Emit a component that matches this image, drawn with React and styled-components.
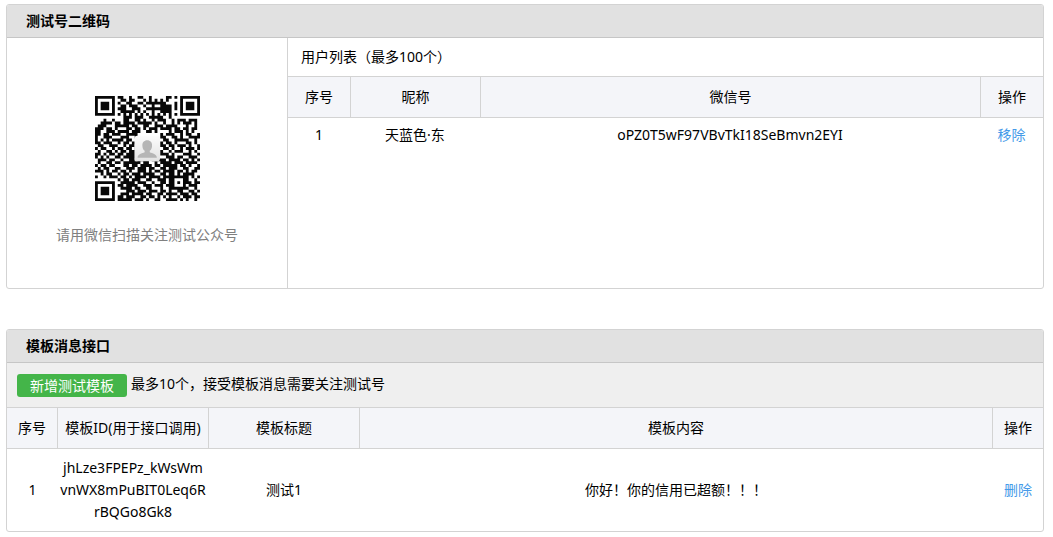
import React from "react";
import styled, { createGlobalStyle } from "styled-components";

const GlobalStyle = createGlobalStyle`
body {
margin: 0;
background-color: #ffffff;
color: #000000;
font-family: "Noto Sans", "Noto Sans CJK SC", sans-serif;
font-size: 14px;
line-height: 22px;
}
`;

const Page = styled.main`
display: flex;
flex-direction: column;
gap: 40px;
padding: 4px 9px 4px 6px;
`;

const Panel = styled.section`
border: 1px solid #d3d3d3;
border-radius: 3px;
overflow: hidden;
`;

const PanelTitle = styled.h2`
margin: 0;
padding: 5px 19px;
font-size: 14px;
font-weight: 700;
background-color: #e1e1e1;
border-bottom: 1px solid #c6c6c6;
`;

const PanelBody = styled.div`
display: flex;
`;

const QrSide = styled.div`
display: flex;
flex-direction: column;
align-items: center;
gap: 23px;
box-sizing: border-box;
width: 281px;
flex-shrink: 0;
padding: 58px 20px 42px;
border-right: 1px solid #d3d3d3;
`;

const QrTip = styled.p`
margin: 0;
color: #808080;
`;

const ListSide = styled.div`
flex: 1;
min-width: 0;
`;

const ListTitle = styled.div`
padding: 8px 13px;
`;

const Table = styled.table`
width: 100%;
table-layout: fixed;
border-collapse: separate;
border-spacing: 0;
text-align: center;
`;

const Th = styled.th`
width: ${(props) => props.$width || "auto"};
box-sizing: border-box;
padding: 9px 0;
font-weight: 400;
white-space: nowrap;
background-color: #f4f5f9;
border-top: 1px solid #d3d3d3;
border-bottom: 1px solid #d3d3d3;

& + & {
border-left: 1px solid #d3d3d3;
}
`;

const Td = styled.td`
padding: ${(props) => (props.$tall ? "8px 2px 8px 3px" : "6px 0")};
word-break: break-all;
`;

const ActionLink = styled.a`
color: #459ae9;
text-decoration: none;
`;

const Toolbar = styled.div`
display: flex;
align-items: flex-start;
gap: 4px;
padding: 11px 10px 10px;
line-height: 20px;
background-color: #efefef;
`;

const AddButton = styled.button`
width: 110px;
height: 23px;
padding: 0;
border: none;
border-radius: 3px;
font-family: inherit;
font-size: 14px;
line-height: 23px;
color: #ffffff;
background-color: #44b549;
cursor: pointer;
`;

const QR_ROWS = [
    "1111111011001001100100000110101111111",
    "1000001001101100010101010100001000001",
    "1011101010011001101111111000101011101",
    "1011101001101110010010011110101011101",
    "1011101011100111001111111110101011101",
    "1000001001111101010010011110001000001",
    "1111111010101010101010101010101111111",
    "0000000000111011100111110010000000000",
    "0001001000110011010010111001011101110",
    "0011110110111101111101001001010111010",
    "0111000111110110011001110111100010010",
    "1110110100011011010111011110110110110",
    "1100111011110111001101000010111010100",
    "1101101110011110000000010111001011001",
    "1001110001110010000000011001101001111",
    "1010101111011000000000001100111110010",
    "1101110010110110000000010110100011010",
    "0110011100101100000000011011011101001",
    "1011001011011010000000001101001011101",
    "0100110101101110000000010010111001010",
    "1101011011011110000000011101000111001",
    "1010100110111110000000000111011001110",
    "0111011001001101111010111011110110101",
    "0100110110111111011001011110111011110",
    "1011011000110110111101101111101101001",
    "0101100110011101110110011011100110011",
    "1110101101101001110101101111011010110",
    "0010110010110111011110011011010111100",
    "1001011101101011110111101111111110101",
    "0000000010110111001100111011000110010",
    "1111111001111101110010011011010111011",
    "1000001011011110011101110111000101110",
    "1011101001111011001100010011111110010",
    "1011101000011101110111011010011001101",
    "1011101001110111101100110111101110110",
    "1000001011011100110110101010010111011",
    "1111111011111011101001100111101010010",
];

function QrCode() {
    const path = QR_ROWS.map((row, y) =>
        row.split("").map((cell, x) => (cell === "1" ? `M${x} ${y}h1v1h-1z` : "")).join("")
    ).join("");

    return (
        <svg width="105" height="105" viewBox="0 0 37 37" role="img" aria-label="测试号二维码">
            <defs>
                <linearGradient id="avatarBg" x1="0" y1="0" x2="0" y2="1">
                    <stop offset="0" stopColor="#fcfcfc" />
                    <stop offset="1" stopColor="#e2e2e2" />
                </linearGradient>
            </defs>
            <path d={path} fill="#080808" />
            <rect x="13.9" y="14" width="9" height="9" rx="1" fill="url(#avatarBg)" />
            <path
                d="M18.4 15.6c-1.1 0-1.8.8-1.7 1.9 0 .8.3 1.4.8 1.8v.5c-.9.4-2.5.6-2.5 2h6.8c0-1.4-1.6-1.6-2.5-2v-.5c.5-.4.8-1 .8-1.8.1-1.1-.6-1.9-1.7-1.9z"
                fill="#b5b5b5"
            />
        </svg>
    );
}

const users = [{ name: "天蓝色·东", wechat: "oPZ0T5wF97VBvTkI18SeBmvn2EYI" }];

const templates = [
    {
        id: "jhLze3FPEPz_kWsWmvnWX8mPuBIT0Leq6RrBQGo8Gk8",
        title: "测试1",
        content: "你好！你的信用已超额！！！",
    },
];

function UserTable() {
    return (
        <Table>
            <thead>
                <tr>
                    <Th $width="62px">序号</Th>
                    <Th $width="130px">昵称</Th>
                    <Th>微信号</Th>
                    <Th $width="63px">操作</Th>
                </tr>
            </thead>
            <tbody>
                {users.map((user, index) => (
                    <tr key={user.wechat}>
                        <Td>{index + 1}</Td>
                        <Td>{user.name}</Td>
                        <Td>{user.wechat}</Td>
                        <Td><ActionLink href="#remove">移除</ActionLink></Td>
                    </tr>
                ))}
            </tbody>
        </Table>
    );
}

function TemplateTable() {
    return (
        <Table>
            <thead>
                <tr>
                    <Th $width="50px">序号</Th>
                    <Th $width="151px">模板ID(用于接口调用)</Th>
                    <Th $width="151px">模板标题</Th>
                    <Th>模板内容</Th>
                    <Th $width="51px">操作</Th>
                </tr>
            </thead>
            <tbody>
                {templates.map((template, index) => (
                    <tr key={template.id}>
                        <Td $tall>{index + 1}</Td>
                        <Td $tall>{template.id}</Td>
                        <Td $tall>{template.title}</Td>
                        <Td $tall>{template.content}</Td>
                        <Td $tall><ActionLink href="#delete">删除</ActionLink></Td>
                    </tr>
                ))}
            </tbody>
        </Table>
    );
}

function App() {
    return (
        <Page>
            <GlobalStyle />
            <Panel>
                <PanelTitle>测试号二维码</PanelTitle>
                <PanelBody>
                    <QrSide>
                        <QrCode />
                        <QrTip>请用微信扫描关注测试公众号</QrTip>
                    </QrSide>
                    <ListSide>
                        <ListTitle>用户列表（最多100个）</ListTitle>
                        <UserTable />
                    </ListSide>
                </PanelBody>
            </Panel>
            <Panel>
                <PanelTitle>模板消息接口</PanelTitle>
                <Toolbar>
                    <AddButton type="button">新增测试模板</AddButton>
                    <span>最多10个，接受模板消息需要关注测试号</span>
                </Toolbar>
                <TemplateTable />
            </Panel>
        </Page>
    );
}

export default App;
